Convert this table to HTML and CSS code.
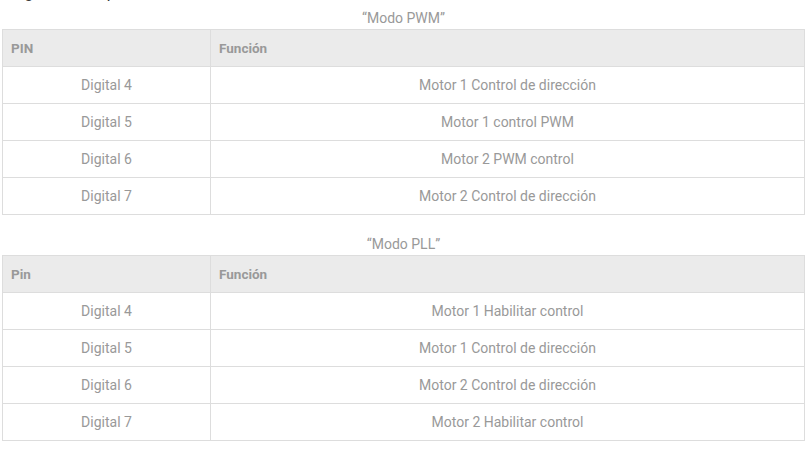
FILE: index.html
```html
<!DOCTYPE html>
<html lang="es">
<head>
<meta charset="utf-8">
<link rel="stylesheet" href="styles.css">
</head>
<body>
<p class="heading">Asignación de pines</p>
<table class="pins">
<caption>“Modo PWM”</caption>
<thead><tr><th class="c1">PIN</th><th>Función</th></tr></thead>
<tbody>
<tr><td>Digital 4</td><td>Motor 1 Control de dirección</td></tr>
<tr><td>Digital 5</td><td>Motor 1 control PWM</td></tr>
<tr><td>Digital 6</td><td>Motor 2 PWM control</td></tr>
<tr><td>Digital 7</td><td>Motor 2 Control de dirección</td></tr>
</tbody>
</table>
<table class="pins second">
<caption>“Modo PLL”</caption>
<thead><tr><th class="c1">Pin</th><th>Función</th></tr></thead>
<tbody>
<tr><td>Digital 4</td><td>Motor 1 Habilitar control</td></tr>
<tr><td>Digital 5</td><td>Motor 1 Control de dirección</td></tr>
<tr><td>Digital 6</td><td>Motor 2 Control de dirección</td></tr>
<tr><td>Digital 7</td><td>Motor 2 Habilitar control</td></tr>
</tbody>
</table>
</body>
</html>
```
FILE: styles.css
```css
html, body {
  margin: 0;
  padding: 0;
  background: #fff;
}
body {
  font-family: Roboto, "Liberation Sans", sans-serif;
  font-size: 14px;
  color: #999;
}
.heading {
  margin: -17px 0 0 0;
  line-height: 20px;
  font-size: 16px;
  color: #333;
  padding-left: 2px;
}
.pins {
  border-collapse: collapse;
  width: 803px;
  margin-left: 2px;
  table-layout: fixed;
}
.pins caption {
  padding: 4px 0 0 0;
  height: 22px;
  line-height: 22px;
  text-align: center;
  color: #999;
}
.second {
  margin-top: 14px;
}
.pins th, .pins td {
  border: 1px solid #ddd;
  height: 37px;
  padding: 0 8px;
  box-sizing: border-box;
}
.pins th {
  background: #ebebeb;
  text-align: left;
  font-weight: bold;
  font-size: 13.5px;
  color: #999;
}
.pins th.c1 {
  width: 208px;
}
.pins td {
  text-align: center;
  color: #999;
}
```
